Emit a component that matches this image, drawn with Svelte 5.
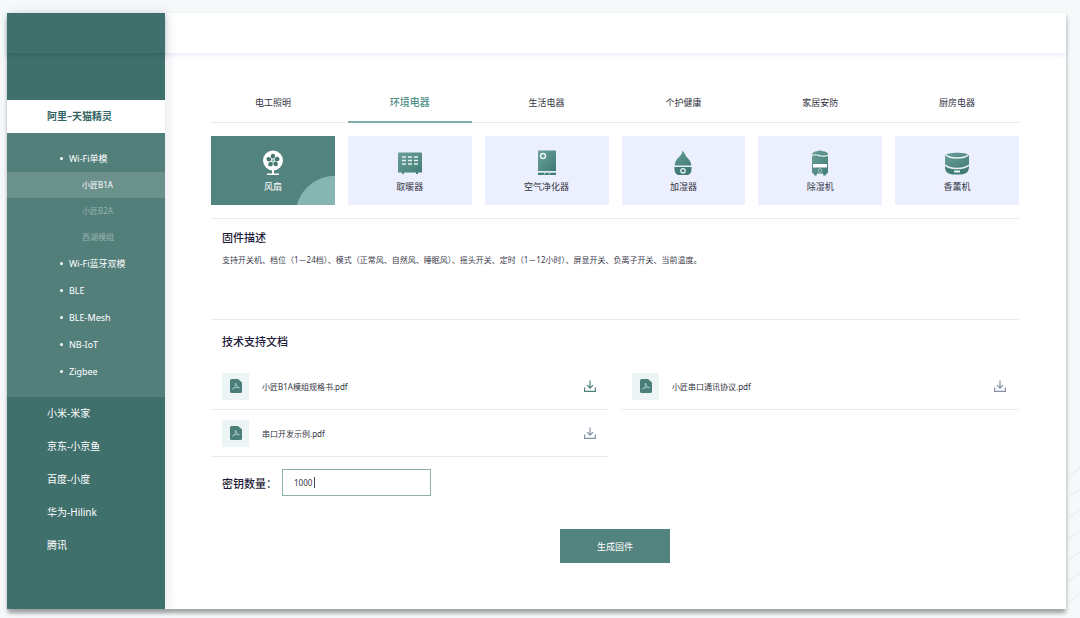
<script lang="ts">
  let activeTab = $state('环境电器');
  let activeDevice = $state('fan');
  let activeModule = $state('小匠B1A');
  let keyCount = $state('1000');

  const tabs = ['电工照明', '环境电器', '生活电器', '个护健康', '家居安防', '厨房电器'];
  const modules = ['小匠B1A', '小匠B2A', '西湖模组'];
  const protocols = ['Wi-Fi蓝牙双模', 'BLE', 'BLE-Mesh', 'NB-IoT', 'Zigbee'];
  const platforms = ['小米-米家', '京东-小京鱼', '百度-小度', '华为-Hilink', '腾讯'];

  const devices = [
    { id: 'fan', name: '风扇' },
    { id: 'heater', name: '取暖器' },
    { id: 'purifier', name: '空气净化器' },
    { id: 'humidifier', name: '加湿器' },
    { id: 'dehumidifier', name: '除湿机' },
    { id: 'aroma', name: '香薰机' },
  ];

  const files = [
    { name: '小匠B1A模组规格书.pdf', strong: true },
    { name: '小匠串口通讯协议.pdf', strong: false },
    { name: '串口开发示例.pdf', strong: false },
  ];
</script>

<div class="page">
  <svg class="lines" viewBox="0 0 20 160" aria-hidden="true">
    {#each [0, 1, 2, 3, 4, 5, 6] as i}
      <path d="M0 {24 + i * 21}L20 {10 + i * 21}" />
    {/each}
  </svg>

  <div class="panel">
    <aside class="sidebar">
      <div class="brand"></div>
      <nav>
        <a class="platform current" href="#tmall">阿里–天猫精灵</a>
        <div class="submenu">
          <a class="protocol" href="#wifi">Wi-Fi单模</a>
          {#each modules as m}
            <button class="module" class:active={activeModule === m} onclick={() => (activeModule = m)}>{m}</button>
          {/each}
          {#each protocols as p}
            <a class="protocol" href="#{p}">{p}</a>
          {/each}
        </div>
        {#each platforms as p}
          <a class="platform" href="#{p}">{p}</a>
        {/each}
      </nav>
    </aside>

    <div class="body">
      <header class="topbar"></header>
      <main>
        <div class="tabs">
          {#each tabs as tab}
            <button class="tab" class:active={activeTab === tab} onclick={() => (activeTab = tab)}>{tab}</button>
          {/each}
        </div>

        <div class="devices">
          {#each devices as d}
            <button class="device" class:active={activeDevice === d.id} onclick={() => (activeDevice = d.id)}>
              <svg width="26" height="26" viewBox="0 0 26 26" aria-hidden="true">
                <defs>
                  <linearGradient id="g-{d.id}" x1="0" y1="0" x2="1" y2="1">
                    <stop offset="0" stop-color="#6b9f99" />
                    <stop offset="1" stop-color="#417c75" />
                  </linearGradient>
                </defs>
                {#if d.id === 'fan'}
                  <circle cx="13" cy="10.500" r="10" fill="#fff" />
                  {#each [0, 72, 144, 216, 288] as a}
                    <path d="M12.300 8.600C9.800 7.500 10.300 4 13 3.800C15.500 3.900 15.800 6.700 13.800 8.500Z" fill="#44756f" transform="rotate({a} 13 10.500)" />
                  {/each}
                  <circle cx="13" cy="10.500" r="1.300" fill="#7fb3ae" />
                  <path d="M12 20h2v3.500h5v1.500H7v-1.500h5z" fill="#fff" />
                {:else if d.id === 'heater'}
                  <path d="M2 2.500h22a1 1 0 0 1 1 1v19H1v-19a1 1 0 0 1 1-1zM5 22h2v2H5zM19 22h2v2h-2z" fill="url(#g-heater)" />
                  <path d="M5 7h4M11 7h4M17 7h4M5 10.500h4M11 10.500h4M17 10.500h4M5 14h4M11 14h4M17 14h4" stroke="#e6f3f2" stroke-width="1.500" />
                {:else if d.id === 'purifier'}
                  <path d="M5 .500h16a1 1 0 0 1 1 1V21H4V1.500a1 1 0 0 1 1-1z" fill="url(#g-purifier)" />
                  <path d="M4 22.500h18v2.500H4z" fill="#417c75" />
                  <path d="M4 22h18M10 24.500l1.500-2M15 24.500l1.500-2" stroke="#dbeceb" />
                  <circle cx="9" cy="6" r="2.500" fill="none" stroke="#e6f3f2" stroke-width="1.500" />
                {:else if d.id === 'humidifier'}
                  <path d="M12 .500C16 4 14.500 5 18 8.500C20.500 11 21 13 21.300 15.500H4.700C5 11 7 9 9.500 6.500C11.500 4.500 12.500 3 12 .500z" fill="url(#g-humidifier)" />
                  <path d="M4.500 17h17c.300 4-.700 7.500-4 8h-9c-3.300-.500-4.300-4-4-8z" fill="#417c75" />
                  <circle cx="13" cy="20.800" r="2.200" fill="none" stroke="#e6f3f2" stroke-width="1.300" />
                {:else if d.id === 'dehumidifier'}
                  <path d="M5 5.500C5 2.500 7 1.500 10.500 1.300C11 .300 15 .300 15.500 1.300C19 1.500 21 2.500 21 5.500V22q0 1.500-1.500 1.500L18.500 25.500h-2l-.500-2h-6l-.500 2h-2l-1-2Q5 23.500 5 22z" fill="url(#g-dehumidifier)" />
                  <path d="M5 5.500C9 3.500 11 5.500 14 6C17 6.500 19 5.500 21 5.500" fill="none" stroke="#e6f3f2" stroke-width="1.200" />
                  <path d="M6 14h14v3.500H6z" fill="#fff" />
                  <circle cx="13" cy="20.500" r="1.800" fill="none" stroke="#9cc4c0" />
                {:else}
                  <path d="M1 6C1 1.500 25 1.500 25 6V17C21 21 5 21 1 17z" fill="url(#g-aroma)" />
                  <path d="M2 5C6 9 20 9 24 5" fill="none" stroke="#e6f3f2" stroke-width="1.500" />
                  <path d="M1 16.500C5 20.500 21 20.500 25 16.500C25 24.500 19 24.500 13 24.500S1 24.500 1 16.500z" fill="#417c75" />
                  <path d="M1 15C5 19.500 21 19.500 25 15" fill="none" stroke="#e6f3f2" stroke-width="1.500" />
                  <path d="M10 21.500h6" stroke="#e6f3f2" stroke-width="2" />
                {/if}
              </svg>
              <span>{d.name}</span>
            </button>
          {/each}
        </div>

        <section class="firmware">
          <h2>固件描述</h2>
          <p>支持开关机、档位（1－24档）、模式（正常风、自然风、睡眠风）、摇头开关、定时（1－12小时）、屏显开关、负离子开关、当前温度。</p>
        </section>

        <section class="docs">
          <h2>技术支持文档</h2>
          <div class="files">
            {#each files as f}
              <div class="file">
                <span class="badge">
                  <svg width="12" height="14" viewBox="0 0 12 14" aria-hidden="true">
                    <path d="M1.500 0H8l4 3.500v9q0 1.500-1.500 1.500h-9Q0 14 0 12.500v-11Q0 0 1.500 0z" fill="#4a7f79" />
                    <path d="M5.500 4C6.500 7 7 8 9.500 8.800C6 8 4.500 8.500 2.500 10.200C4.500 9 6 7 5.500 4z" fill="none" stroke="#a9cdc9" stroke-width=".9" />
                  </svg>
                </span>
                <span class="name">{f.name}</span>
                <button class="download" class:strong={f.strong} aria-label="下载 {f.name}">
                  <svg width="12" height="12" viewBox="0 0 12 12" fill="none" stroke="currentColor" stroke-width="1.200" aria-hidden="true">
                    <path d="M6 .500v7.500M3 5.200l3 3 3-3M.600 7.500v3.900h10.800V7.500" />
                  </svg>
                </button>
              </div>
            {/each}
          </div>
        </section>

        <div class="key-row">
          <label for="keys">密钥数量：</label>
          <div class="field">
            <input id="keys" type="text" bind:value={keyCount} />
            <i class="caret"></i>
          </div>
        </div>

        <button class="submit">生成固件</button>
      </main>
    </div>
  </div>
</div>

<style>
  :global(body) {
    margin: 0;
  }

  button {
    border: none;
    background: none;
    padding: 0;
    font-family: inherit;
    color: inherit;
    cursor: pointer;
  }

  a {
    text-decoration: none;
    color: inherit;
  }

  .page {
    position: relative;
    display: flex;
    box-sizing: border-box;
    min-height: 100vh;
    padding: 13px 14px 9px 7px;
    background: #f6f9f9;
    font-family: 'Noto Sans', 'Noto Sans CJK SC', sans-serif;
    color: #33343f;
  }

  .lines {
    position: absolute;
    right: 0;
    bottom: 0;
    width: 20px;
    height: 160px;
  }

  .lines path {
    stroke: #e6ebeb;
    fill: none;
  }

  .panel {
    position: relative;
    display: flex;
    flex: 1;
    min-width: 0;
    background: #fff;
    box-shadow: 0 5px 4px -1px #a3a5a5, 1px 2px 4px #d5dadd;
  }

  .sidebar {
    flex: 0 0 158px;
    background: #40706c;
    color: #fff;
    box-shadow: 3px 0 10px rgba(80, 80, 150, 0.13);
  }

  .brand {
    height: 40px;
    margin-bottom: 47px;
    box-shadow: 0 3px 5px rgba(30, 70, 80, 0.25);
  }

  .platform {
    display: block;
    padding-left: 40px;
    font-size: 10px;
    line-height: 33px;
  }

  .platform.current {
    background: #fff;
    color: #31645f;
    font-weight: 600;
  }

  .submenu {
    padding: 12px 0;
    background: #537f7b;
  }

  .protocol {
    display: flex;
    align-items: center;
    gap: 6px;
    padding-left: 53px;
    font-size: 9px;
    line-height: 27px;
  }

  .protocol::before {
    content: '';
    width: 3px;
    height: 3px;
    border-radius: 50%;
    background: #fff;
  }

  .module {
    display: block;
    width: 100%;
    padding-left: 75px;
    text-align: left;
    font-size: 8px;
    line-height: 26px;
    color: #98b3b0;
  }

  .module.active {
    background: #6b918d;
    color: #fff;
  }

  .body {
    flex: 1;
    min-width: 0;
  }

  .topbar {
    height: 40px;
    box-shadow: 0 3px 5px rgba(90, 80, 180, 0.09);
  }

  main {
    display: flex;
    flex-direction: column;
    padding: 31px 47px 44px 46px;
  }

  .tabs,
  .devices {
    display: grid;
    grid-template-columns: repeat(6, 1fr);
    column-gap: 13px;
  }

  .tabs {
    border-bottom: 1px solid #e6e8ea;
  }

  .tab {
    margin-bottom: -1px;
    border-bottom: 2px solid transparent;
    font-size: 9px;
    line-height: 37px;
  }

  .tab.active {
    border-color: #7fada7;
    color: #4e8f87;
    font-size: 10px;
    font-weight: 500;
  }

  .devices {
    margin: 13px 0;
  }

  .device {
    display: flex;
    flex-direction: column;
    align-items: center;
    gap: 3px;
    height: 69px;
    padding-top: 14px;
    background: #ebeffe;
    font-size: 9px;
    line-height: 16px;
  }

  .device.active {
    background: radial-gradient(circle at 100% 115%, #87b5b2 39px, #53837e 40px);
    color: #fff;
  }

  h2 {
    margin: 0;
    font-size: 11px;
    line-height: 18px;
    font-weight: 500;
    color: #1c1b38;
  }

  .firmware {
    min-height: 90px;
    padding: 10px 11px 0;
    border-top: 1px solid #e9ebed;
  }

  .firmware p {
    margin: 6px 0 0;
    font-size: 8px;
    line-height: 14px;
    color: #3c3c4c;
  }

  .docs {
    padding-top: 13px;
    border-top: 1px solid #e9ebed;
  }

  .docs h2 {
    padding-left: 11px;
  }

  .files {
    display: grid;
    grid-template-columns: 1fr 1fr;
    column-gap: 12px;
    margin-top: 12px;
  }

  .file {
    display: flex;
    align-items: center;
    height: 46px;
    padding: 0 13px 0 11px;
    border-bottom: 1px solid #e9ebed;
  }

  .badge {
    display: grid;
    place-items: center;
    width: 27px;
    height: 27px;
    background: #edf4f5;
  }

  .name {
    flex: 1;
    padding-left: 13px;
    font-size: 8px;
  }

  .download {
    display: grid;
    color: #8291a3;
  }

  .download.strong {
    color: #4e827f;
  }

  .key-row {
    display: flex;
    align-items: center;
    gap: 5px;
    margin-top: 12px;
    padding-left: 11px;
  }

  .key-row label {
    font-size: 11px;
    font-weight: 500;
    color: #1c1b38;
  }

  .field {
    position: relative;
  }

  .field input {
    box-sizing: border-box;
    width: 149px;
    height: 27px;
    padding: 0 11px;
    border: 1px solid #8cafa8;
    border-radius: 0;
    outline: none;
    font-family: inherit;
    font-size: 8px;
    color: inherit;
    caret-color: transparent;
  }

  .caret {
    position: absolute;
    left: 32px;
    top: 8px;
    width: 1px;
    height: 11px;
    background: #4a4a5c;
  }

  .submit {
    align-self: center;
    width: 110px;
    height: 34px;
    margin-top: 33px;
    background: #53837e;
    color: #fff;
    font-size: 9px;
  }
</style>
